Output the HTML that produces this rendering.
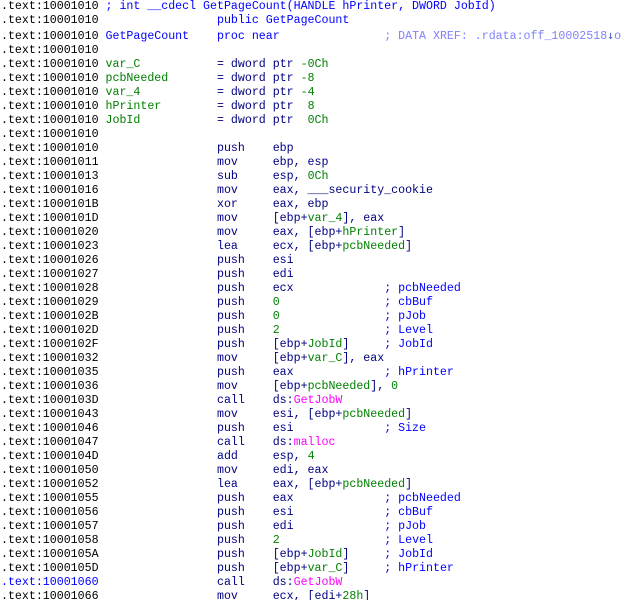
<!DOCTYPE html>
<html><head><meta charset="utf-8"><style>
html,body{margin:0;padding:0;background:#fff;width:638px;height:600px;overflow:hidden}
pre{margin:0;padding:0 0 0 1px;font-family:"Liberation Mono","Courier New",monospace;font-size:11.62px;line-height:14px;color:#000080}
.a{color:#000}
.b{color:#0000ff}
.g{color:#008000}
.x{color:#8080ff}
.m{color:#ff00ff}
.n{color:#000080}
.ar{font-family:"DejaVu Sans Mono",monospace;color:#4060c0}
</style></head><body><pre><span class="a">.text:10001010</span> <span class="b">; int __cdecl GetPageCount(HANDLE hPrinter, DWORD JobId)</span>
<span class="a">.text:10001010</span>                 <span class="b">public GetPageCount</span>
<span class="a">.text:10001010</span> <span class="b">GetPageCount</span>    <span class="b">proc near</span>               <span class="x">; DATA XREF: .rdata:off_10002518<span class="ar">↓</span>o</span>
<span class="a">.text:10001010</span>
<span class="a">.text:10001010</span> <span class="g">var_C</span>           = dword ptr <span class="g">-0Ch</span>
<span class="a">.text:10001010</span> <span class="g">pcbNeeded</span>       = dword ptr <span class="g">-8</span>
<span class="a">.text:10001010</span> <span class="g">var_4</span>           = dword ptr <span class="g">-4</span>
<span class="a">.text:10001010</span> <span class="g">hPrinter</span>        = dword ptr  <span class="g">8</span>
<span class="a">.text:10001010</span> <span class="g">JobId</span>           = dword ptr  <span class="g">0Ch</span>
<span class="a">.text:10001010</span>
<span class="a">.text:10001010</span>                 push    ebp
<span class="a">.text:10001011</span>                 mov     ebp, esp
<span class="a">.text:10001013</span>                 sub     esp, <span class="g">0Ch</span>
<span class="a">.text:10001016</span>                 mov     eax, ___security_cookie
<span class="a">.text:1000101B</span>                 xor     eax, ebp
<span class="a">.text:1000101D</span>                 mov     [ebp+<span class="g">var_4</span>], eax
<span class="a">.text:10001020</span>                 mov     eax, [ebp+<span class="g">hPrinter</span>]
<span class="a">.text:10001023</span>                 lea     ecx, [ebp+<span class="g">pcbNeeded</span>]
<span class="a">.text:10001026</span>                 push    esi
<span class="a">.text:10001027</span>                 push    edi
<span class="a">.text:10001028</span>                 push    ecx             <span class="b">; pcbNeeded</span>
<span class="a">.text:10001029</span>                 push    <span class="g">0</span>               <span class="b">; cbBuf</span>
<span class="a">.text:1000102B</span>                 push    <span class="g">0</span>               <span class="b">; pJob</span>
<span class="a">.text:1000102D</span>                 push    <span class="g">2</span>               <span class="b">; Level</span>
<span class="a">.text:1000102F</span>                 push    [ebp+<span class="g">JobId</span>]     <span class="b">; JobId</span>
<span class="a">.text:10001032</span>                 mov     [ebp+<span class="g">var_C</span>], eax
<span class="a">.text:10001035</span>                 push    eax             <span class="b">; hPrinter</span>
<span class="a">.text:10001036</span>                 mov     [ebp+<span class="g">pcbNeeded</span>], <span class="g">0</span>
<span class="a">.text:1000103D</span>                 call    ds:<span class="m">GetJobW</span>
<span class="a">.text:10001043</span>                 mov     esi, [ebp+<span class="g">pcbNeeded</span>]
<span class="a">.text:10001046</span>                 push    esi             <span class="b">; Size</span>
<span class="a">.text:10001047</span>                 call    ds:<span class="m">malloc</span>
<span class="a">.text:1000104D</span>                 add     esp, <span class="g">4</span>
<span class="a">.text:10001050</span>                 mov     edi, eax
<span class="a">.text:10001052</span>                 lea     eax, [ebp+<span class="g">pcbNeeded</span>]
<span class="a">.text:10001055</span>                 push    eax             <span class="b">; pcbNeeded</span>
<span class="a">.text:10001056</span>                 push    esi             <span class="b">; cbBuf</span>
<span class="a">.text:10001057</span>                 push    edi             <span class="b">; pJob</span>
<span class="a">.text:10001058</span>                 push    <span class="g">2</span>               <span class="b">; Level</span>
<span class="a">.text:1000105A</span>                 push    [ebp+<span class="g">JobId</span>]     <span class="b">; JobId</span>
<span class="a">.text:1000105D</span>                 push    [ebp+<span class="g">var_C</span>]     <span class="b">; hPrinter</span>
<span class="b">.text:10001060</span>                 call    ds:<span class="m">GetJobW</span>
<span class="a">.text:10001066</span>                 mov     ecx, [edi+<span class="g">28h</span>]
</pre></body></html>
